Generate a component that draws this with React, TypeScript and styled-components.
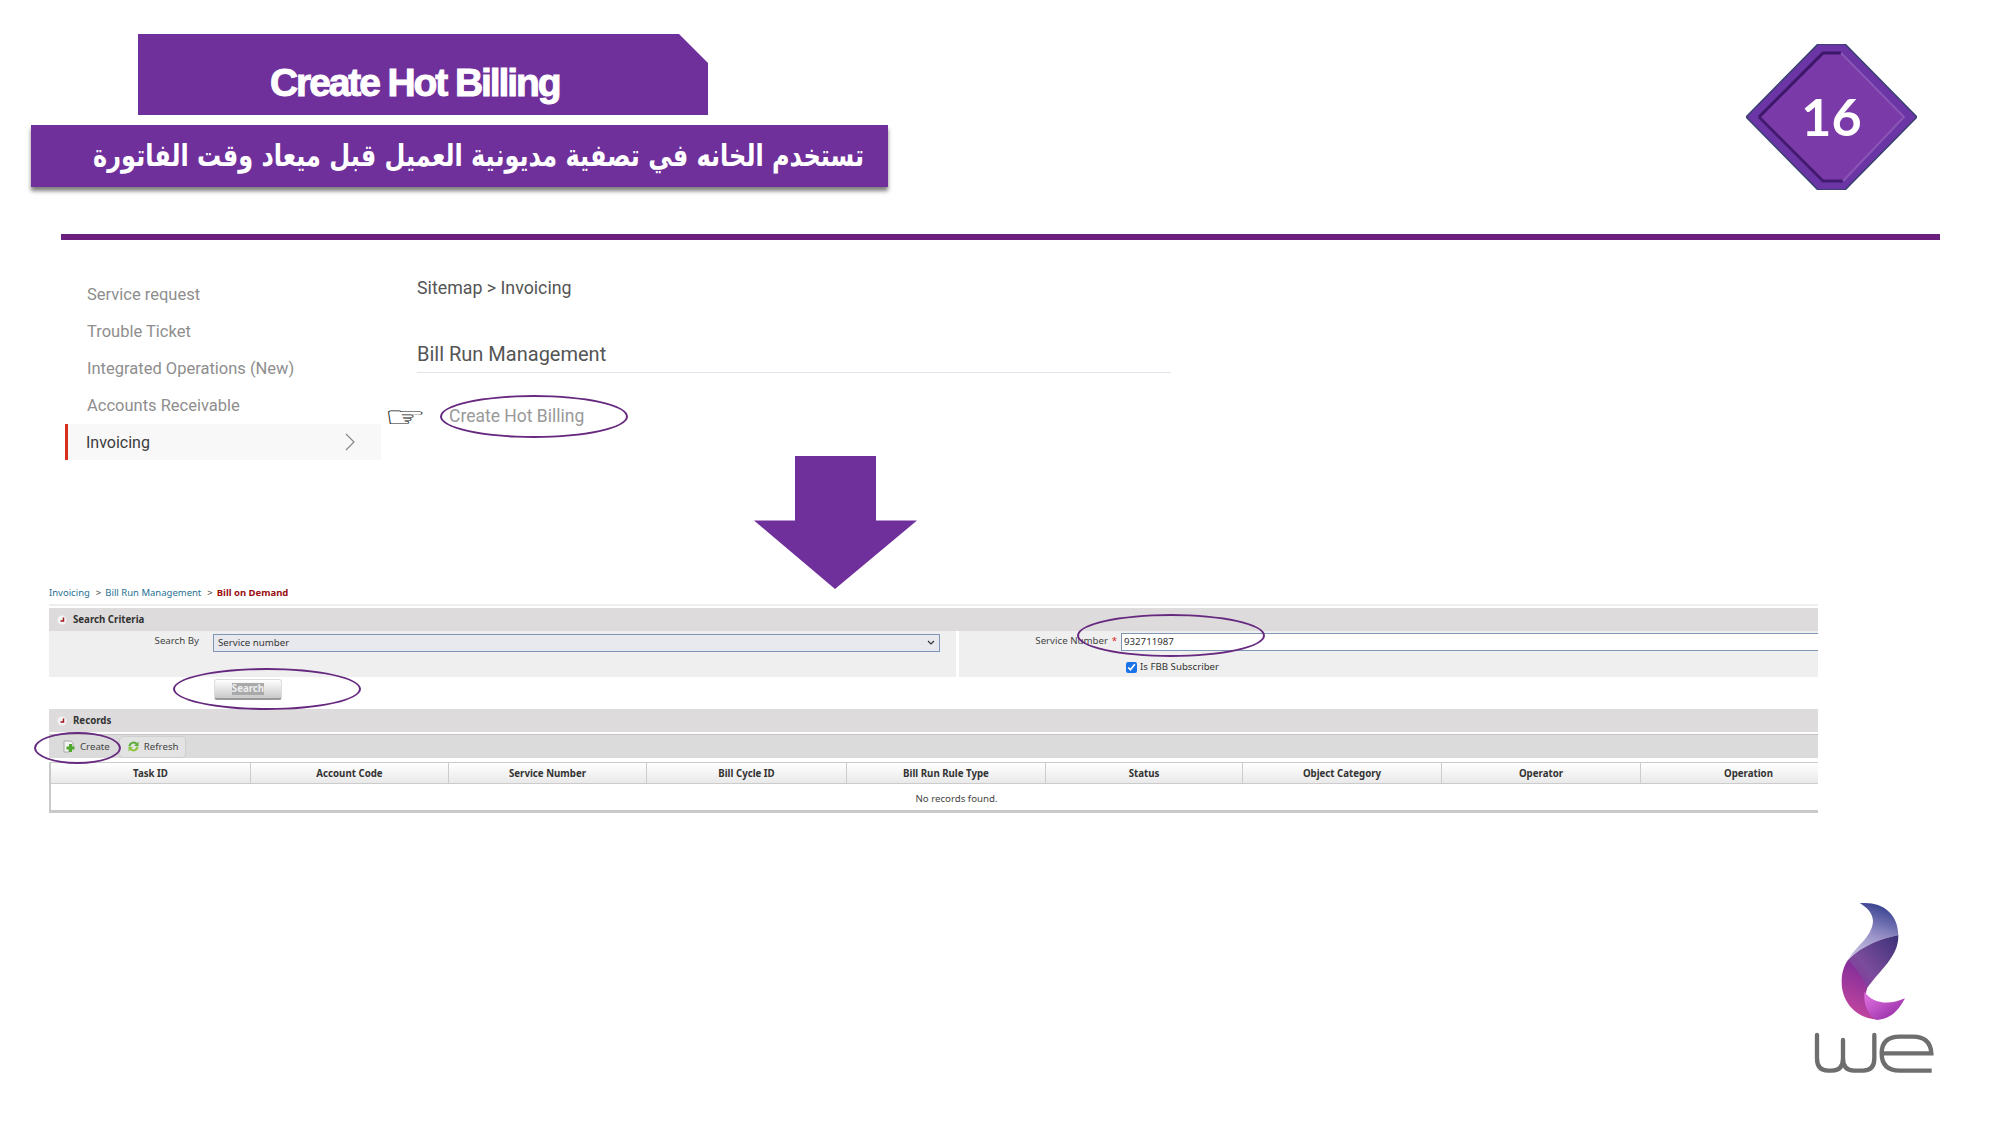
import React from 'react';
import styled, { createGlobalStyle } from 'styled-components';

const Global = createGlobalStyle`
  html, body { margin: 0; padding: 0; background: #fff; }
  #root { width: 2000px; height: 1125px; }
`;

const Slide = styled.div`
  width: 2000px; height: 1125px; background: #fff; overflow: hidden;
  display: flex; flex-direction: column; font-family: "Liberation Sans", sans-serif;
`;
const Header = styled.header`
  height: 234px; display: flex; justify-content: space-between; padding: 34px 83px 0 31px; box-sizing: border-box;
`;
const TitleStack = styled.div`display: flex; flex-direction: column; align-items: flex-start;`;
const TitleBox = styled.h1`
  margin: 0 0 10px 107px; width: 570px; height: 81px; box-sizing: border-box; padding: 24px 0 0 132px;
  background: #70309c; color: #fff; font: 700 39px/50px "Liberation Sans", sans-serif; letter-spacing: -2.1px;
  -webkit-text-stroke: 1px #fff; white-space: nowrap;
  clip-path: polygon(0 0, 541px 0, 570px 29px, 570px 81px, 0 81px);
`;
const SubtitleBox = styled.div`
  width: 857px; height: 62px; box-sizing: border-box; padding-right: 24px; background: #70309c; box-shadow: 0 4px 4px rgba(0,0,0,.5);
  display: flex; align-items: center; justify-content: flex-start; direction: rtl; color: #fff;
`;
const SubtitleText = styled.span`
  display: inline-block; font: 700 24px/40px "DejaVu Sans", sans-serif; white-space: nowrap; transform: scaleY(1.28);
`;
const Badge = styled.div`display: grid; place-items: center; width: 171px; height: 146px; margin-top: 10px;`;
const BadgeArt = styled.svg`grid-area: 1 / 1; width: 171px; height: 146px;`;
const BadgeNum = styled.span`grid-area: 1 / 1; color: #fff; font: 700 52px/1 Lato, sans-serif; position: relative; padding-bottom: 2px;`;
const Rule = styled.div`height: 6px; margin: 0 60px 0 61px; background: #6b2080;`;

const Upper = styled.section`height: 216px; display: flex; padding-left: 65px;`;
const Nav = styled.nav`width: 316px; padding-top: 36px; box-sizing: border-box;`;
const NavItem = styled.div<{ $active?: boolean }>`
  height: ${p => (p.$active ? 36 : 37)}px; display: flex; align-items: center; justify-content: space-between;
  box-sizing: border-box; padding: 0 26px 0 ${p => (p.$active ? 18 : 22)}px;
  font: 400 ${p => (p.$active ? 16 : 16.5)}px Roboto, sans-serif; color: ${p => (p.$active ? '#3c3c3c' : '#8e8e8e')};
  background: ${p => (p.$active ? '#f8f8f8' : 'transparent')};
  border-left: ${p => (p.$active ? '3px solid #d8301c' : '0')};
`;
const Main = styled.div`width: 754px; margin-left: 36px; padding-top: 36px; box-sizing: border-box;`;
const Sitemap = styled.div`font: 400 17.8px/24px Roboto, sans-serif; color: #555;`;
const SectionTitle = styled.h2`
  margin: 40px 0 0; padding-bottom: 4px; border-bottom: 1px solid #dfe4ea;
  font: 400 20px/28px Roboto, sans-serif; color: #555;
`;
const LinkRow = styled.div`
  position: relative; margin-top: 31px; padding-left: 32px; font: 400 17.5px/24px Roboto, sans-serif; color: #999;
`;
const Hand = styled.span`
  position: absolute; left: -33px; top: -5px; font: 400 40px/36px "DejaVu Sans", sans-serif; color: #222;
  transform: scale(1.2, .72); transform-origin: left center;
`;
const Oval = styled.span<{ $l: number; $t: number; $w: number; $h: number }>`
  position: absolute; left: ${p => p.$l}px; top: ${p => p.$t}px; width: ${p => p.$w}px; height: ${p => p.$h}px;
  box-sizing: border-box; border: 2.5px solid #66297f; border-radius: 50%; pointer-events: none;
`;
const ArrowArt = styled.svg`display: block; width: 163px; height: 133px; margin-left: 754px; flex: none;`;

const Lower = styled.section`margin-left: 49px; width: 1769px; font: 400 9.7px "Noto Sans", sans-serif; color: #333;`;
const Crumbs = styled.div`line-height: 8px; padding-bottom: 7px; border-bottom: 2px solid #eee; margin-bottom: 2px; color: #1f6f94; font-size: 9.5px;`;
const CrumbSep = styled.span`color: #444; margin: 0 4px 0 6px;`;
const CrumbNow = styled.b`color: #9a0f0f;`;
const PanelHead = styled.div`
  height: 23px; background: #dddbdc; display: flex; align-items: center; gap: 6px; padding-left: 8px;
  font-weight: 700; color: #333;
`;
const Toggle = styled.svg`width: 10px; height: 10px;`;
const Criteria = styled.div`display: grid; grid-template-columns: 907px 1fr; column-gap: 3px; height: 46px;`;
const CriteriaCol = styled.div`background: #efefef; padding-top: 2px; box-sizing: border-box;`;
const Field = styled.div`position: relative; display: flex; align-items: flex-start;`;
const FieldLabel = styled.label<{ $w: number }>`
  width: ${p => p.$w}px; text-align: right; flex: none; line-height: 16px; color: #444;
`;
const SelectBox = styled.div`
  margin: 1px 0 0 14px; width: 727px; height: 18px; box-sizing: border-box; padding: 0 4px 1px;
  background: #e8e9ee; border: 1px solid #7f97b5; display: flex; align-items: center; justify-content: space-between;
`;
const Star = styled.span`color: #d22; width: 13px; text-align: center; flex: none; line-height: 16px;`;
const TextBox = styled.div`
  flex: 1; height: 18px; box-sizing: border-box; background: #fff; border-top: 1px solid #7f97b5; border-bottom: 1px solid #7f97b5;
  border-left: 1px solid #7f97b5; padding-left: 2px; line-height: 16px;
`;
const CheckRow = styled.label`display: flex; align-items: center; gap: 3px; margin: 10px 0 0 167px; height: 12px; line-height: 14px;`;
const Check = styled.input`width: 11px; height: 11px; margin: 0; accent-color: #1a73e8;`;
const ButtonRow = styled.div`height: 32px; padding: 2px 0 0 165px; box-sizing: border-box;`;
const SearchButton = styled.div`
  position: relative; width: 68px; height: 21px; box-sizing: border-box; border: 1px solid #ddd; border-bottom: 2px solid #999;
  border-radius: 3px; background: linear-gradient(#fff, #c9c9c9); display: flex; align-items: center; justify-content: center;
`;
const SelectedText = styled.span`background: #a9a9a9; color: #eee; font-weight: 700; line-height: 12px;`;
const Toolbar = styled.div`
  position: relative; height: 24px; margin-top: 2px; background: #dbdbdb; border-top: 1px solid #c4c4c4; box-sizing: border-box;
  display: flex; align-items: center; padding-left: 14px; gap: 3px;
`;
const ToolButton = styled.div<{ $boxed?: boolean }>`
  height: 22px; display: flex; align-items: center; gap: 4px; padding: 0 6px 1px ${p => (p.$boxed ? 7 : 0)}px; box-sizing: border-box;
  background: ${p => (p.$boxed ? '#e3e3e3' : 'transparent')}; border-radius: 4px;
  border: ${p => (p.$boxed ? '1px solid #cfcfcf' : '0')}; color: #444;
`;
const ToolIcon = styled.svg`width: 13px; height: 13px;`;
const Table = styled.div`margin-top: 4px; border-left: 2px solid #c9c9c9; border-bottom: 3px solid #c9c9c9;`;
const HeadRow = styled.div`
  display: grid; grid-template-columns: 200px 198px 198px 200px 199px 197px 199px 199px 177px; height: 22px; box-sizing: border-box;
  border-top: 1px solid #ccc; border-bottom: 1px solid #ccc; background: linear-gradient(#fff, #e9e9e9);
`;
const HeadCell = styled.div`
  display: flex; align-items: center; justify-content: center; border-right: 1px solid #ccc; font-weight: 700; color: #333;
  &:last-child { border-right: 0; padding-left: 38px; }
`;
const EmptyRow = styled.div`height: 26px; box-sizing: border-box; padding: 2px 0 0 44px; display: flex; align-items: center; justify-content: center; color: #444;`;

const Footer = styled.footer`margin-top: auto; display: flex; justify-content: flex-end; padding: 0 66px 52px 0;`;
const Logo = styled.svg`width: 121px; height: 173px;`;

const columns = ['Task ID', 'Account Code', 'Service Number', 'Bill Cycle ID', 'Bill Run Rule Type', 'Status', 'Object Category', 'Operator', 'Operation'];
const nav = ['Service request', 'Trouble Ticket', 'Integrated Operations (New)', 'Accounts Receivable'];

const ToggleIcon = () => (
  <Toggle viewBox="0 0 10 10">
    <circle cx="5" cy="5" r="4.5" fill="#f4f4f4" />
    <path d="M6.5 2.5V6H3.5" fill="none" stroke="#a01818" strokeWidth="1.5" />
  </Toggle>
);

export default function App() {
  return (
    <Slide>
      <Global />
      <Header>
        <TitleStack>
          <TitleBox>Create Hot Billing</TitleBox>
          <SubtitleBox>
            <SubtitleText>تستخدم الخانه في تصفية مديونية العميل قبل ميعاد وقت الفاتورة</SubtitleText>
          </SubtitleBox>
        </TitleStack>
        <Badge>
          <BadgeArt viewBox="0 0 171 146">
            <polygon points="72,0 99,0 171,73 99,146 72,146 0,73" fill="#6c35a5" stroke="#35406f" strokeWidth="1.5" />
            <polygon points="77,9 95,9 158,73 97,137 77,137 13,73" fill="#7a3aa8" />
            <path d="M13 73 L77 9 H95" fill="none" stroke="#3c1768" strokeWidth="3" />
            <path d="M13 73 L77 137 H97" fill="none" stroke="#421a70" strokeWidth="3" />
            <path d="M95 9 L158 73 L97 137" fill="none" stroke="#8a55b5" strokeWidth="2" />
          </BadgeArt>
          <BadgeNum>16</BadgeNum>
        </Badge>
      </Header>
      <Rule />
      <Upper>
        <Nav>
          {nav.map(n => <NavItem key={n}>{n}</NavItem>)}
          <NavItem $active>
            Invoicing
            <svg width="10" height="18" viewBox="0 0 10 18"><path d="M1 1l8 8-8 8" fill="none" stroke="#888" strokeWidth="1.2" /></svg>
          </NavItem>
        </Nav>
        <Main>
          <Sitemap>Sitemap &gt; Invoicing</Sitemap>
          <SectionTitle>Bill Run Management</SectionTitle>
          <LinkRow>
            <Hand>☞</Hand>
            Create Hot Billing
            <Oval $l={23} $t={-9} $w={188} $h={43} />
          </LinkRow>
        </Main>
      </Upper>
      <ArrowArt viewBox="0 0 163 134" preserveAspectRatio="none">
        <polygon points="41,0 122,0 122,65 163,65 81,134 0,65 41,65" fill="#70309c" />
      </ArrowArt>
      <Lower>
        <Crumbs>
          Invoicing<CrumbSep>&gt;</CrumbSep>Bill Run Management<CrumbSep>&gt;</CrumbSep><CrumbNow>Bill on Demand</CrumbNow>
        </Crumbs>
        <PanelHead><ToggleIcon />Search Criteria</PanelHead>
        <Criteria>
          <CriteriaCol>
            <Field>
              <FieldLabel $w={150}>Search By</FieldLabel>
              <SelectBox>
                Service number
                <svg width="8" height="6" viewBox="0 0 8 6"><path d="M1 1l3 3 3-3" fill="none" stroke="#333" strokeWidth="1.2" /></svg>
              </SelectBox>
            </Field>
          </CriteriaCol>
          <CriteriaCol>
            <Field>
              <FieldLabel $w={149}>Service Number</FieldLabel>
              <Star>*</Star>
              <TextBox>932711987</TextBox>
              <Oval $l={118} $t={-19} $w={188} $h={43} />
            </Field>
            <CheckRow><Check type="checkbox" checked readOnly />Is FBB Subscriber</CheckRow>
          </CriteriaCol>
        </Criteria>
        <ButtonRow>
          <SearchButton>
            <SelectedText>Search</SelectedText>
            <Oval $l={-42} $t={-12} $w={188} $h={42} />
          </SearchButton>
        </ButtonRow>
        <PanelHead><ToggleIcon />Records</PanelHead>
        <Toolbar>
          <ToolButton>
            <ToolIcon viewBox="0 0 13 13">
              <path d="M1 1h7l2 2v5H6v4H1z" fill="#f3f3f3" stroke="#9a9a9a" strokeWidth=".8" />
              <path d="M7.500 4v8M3.500 8h8" stroke="#4fa82e" strokeWidth="3" />
            </ToolIcon>
            Create
          </ToolButton>
          <ToolButton $boxed>
            <ToolIcon viewBox="0 0 13 13">
              <path d="M1.500 6.500A5 5 0 0 1 10 3l1.500-1.500V6H7l1.600-1.600A3 3 0 0 0 3.600 6.500z" fill="#5fae3a" />
              <path d="M11.500 6.500A5 5 0 0 1 3 10l-1.500 1.500V7H6L4.400 8.600A3 3 0 0 0 9.400 6.500z" fill="#8cc63f" />
            </ToolIcon>
            Refresh
          </ToolButton>
          <Oval $l={-15} $t={-3} $w={87} $h={32} />
        </Toolbar>
        <Table>
          <HeadRow>{columns.map(c => <HeadCell key={c}>{c}</HeadCell>)}</HeadRow>
          <EmptyRow>No records found.</EmptyRow>
        </Table>
      </Lower>
      <Footer>
        <Logo viewBox="100 60 363 519">
          <defs>
            <linearGradient id="flameTop" x1="0.6" y1="0" x2="0.3" y2="1">
              <stop offset="0" stopColor="#36408f" />
              <stop offset=".55" stopColor="#9a93c9" />
              <stop offset="1" stopColor="#c9c4e2" />
            </linearGradient>
            <linearGradient id="flameMid" x1="1" y1="0" x2="0" y2="1">
              <stop offset="0" stopColor="#3c3178" />
              <stop offset=".6" stopColor="#7b4c9c" />
              <stop offset="1" stopColor="#8a2f9c" />
            </linearGradient>
            <linearGradient id="flameLow" x1="0.6" y1="0" x2="0.3" y2="1">
              <stop offset="0" stopColor="#7a2a98" />
              <stop offset="1" stopColor="#c7479f" />
            </linearGradient>
            <linearGradient id="flameTail" x1="0" y1="0" x2="1" y2="1">
              <stop offset="0" stopColor="#e676e6" />
              <stop offset="1" stopColor="#8a249c" />
            </linearGradient>
          </defs>
          <path d="M240 70C300 62 355 95 356 165C300 178 250 195 205 240C225 200 275 175 280 125C280 100 262 82 240 70Z" fill="url(#flameTop)" />
          <path d="M205 240C250 195 300 178 356 165C358 230 300 270 262 325C262 330 258 335 255 335L205 290Z" fill="url(#flameMid)" />
          <path d="M205 240C225 262 250 290 262 325C255 345 258 385 300 418C235 420 185 370 186 305C186 280 192 258 205 240Z" fill="url(#flameLow)" />
          <path d="M255 335C275 368 325 378 376 355C355 395 330 418 290 420C262 400 250 370 255 335Z" fill="url(#flameTail)" />
          <path d="M112 465V535Q112 572 145 572H157Q190 572 190 535V480M190 535Q190 572 223 572H250Q284 572 284 535V465" fill="none" stroke="#6e6e6e" strokeWidth="13" strokeLinecap="round" />
          <path d="M306 520H455Q452 470 400 470H360Q306 470 306 520Q306 572 360 572H456" fill="none" stroke="#6e6e6e" strokeWidth="13" />
        </Logo>
      </Footer>
    </Slide>
  );
}
